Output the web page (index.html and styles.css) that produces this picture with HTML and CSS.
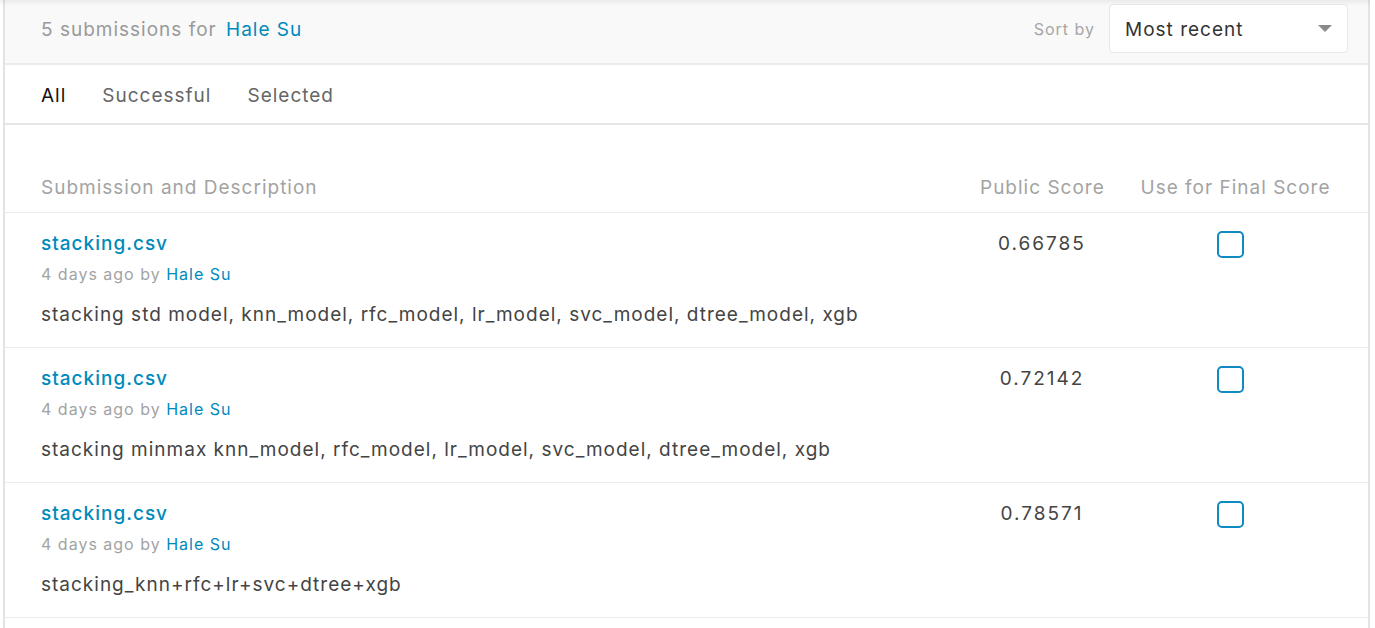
FILE: index.html
```html
<!DOCTYPE html>
<html>
<head>
<meta charset="utf-8">
<link rel="stylesheet" href="styles.css">
</head>
<body>
<div class="page">
  <div class="card">
    <div class="topbar">
      <div class="count">5 submissions for <a class="link" href="#">Hale Su</a></div>
      <div class="sort">
        <span class="sort-label">Sort by</span>
        <div class="select">
          <span>Most recent</span>
          <svg class="caret" width="14" height="8" viewBox="0 0 14 8"><path d="M0 0H14L7 7Z" fill="#8a8a8a"/></svg>
        </div>
      </div>
    </div>
    <div class="tabs">
      <span class="tab active">All</span>
      <span class="tab">Successful</span>
      <span class="tab">Selected</span>
    </div>
    <div class="table">
      <div class="row head">
        <div class="c-desc">Submission and Description</div>
        <div class="c-score">Public Score</div>
        <div class="c-use">Use for Final Score</div>
      </div>
      <div class="row item">
        <div class="c-desc">
          <a class="title" href="#">stacking.csv</a>
          <div class="meta">4 days ago by <a class="link" href="#">Hale Su</a></div>
          <div class="desc">stacking std model, knn_model, rfc_model, lr_model, svc_model, dtree_model, xgb</div>
        </div>
        <div class="c-score score">0.66785</div>
        <div class="c-use"><span class="check"></span></div>
      </div>
      <div class="row item">
        <div class="c-desc">
          <a class="title" href="#">stacking.csv</a>
          <div class="meta">4 days ago by <a class="link" href="#">Hale Su</a></div>
          <div class="desc">stacking minmax knn_model, rfc_model, lr_model, svc_model, dtree_model, xgb</div>
        </div>
        <div class="c-score score">0.72142</div>
        <div class="c-use"><span class="check"></span></div>
      </div>
      <div class="row item">
        <div class="c-desc">
          <a class="title" href="#">stacking.csv</a>
          <div class="meta">4 days ago by <a class="link" href="#">Hale Su</a></div>
          <div class="desc">stacking_knn+rfc+lr+svc+dtree+xgb</div>
        </div>
        <div class="c-score score">0.78571</div>
        <div class="c-use"><span class="check"></span></div>
      </div>
    </div>
  </div>
</div>
</body>
</html>
```
FILE: styles.css
```css
html, body {
  margin: 0;
  padding: 0;
  background: #fff;
  font-family: Inter, "Noto Sans", sans-serif;
}
.page {
  padding-left: 3px;
  width: 1367px;
  height: 628px;
  overflow: hidden;
  position: relative;
}
.page::before {
  content: "";
  position: absolute;
  left: 0; right: 0; top: 0;
  height: 6px;
  background: linear-gradient(rgba(0,0,0,0.06), rgba(0,0,0,0));
  z-index: 2;
}
.card {
  border-left: 2px solid #e3e3e3;
  border-right: 2px solid #e3e3e3;
  min-height: 700px;
  letter-spacing: 1px;
}
a { text-decoration: none; }
.link { color: #008abc; }
.topbar {
  background: #f9f9f9;
  border-bottom: 2px solid #ebebeb;
  display: flex;
  align-items: center;
  justify-content: space-between;
  padding: 0 20px 0 36px;
  box-sizing: border-box;
  height: 65px;
}
.count {
  font-size: 19px;
  color: #999;
  margin-top: -5px;
}
.count .link { margin-left: 3px; }
.sort {
  display: flex;
  align-items: center;
  gap: 14px;
  margin-top: -7px;
}
.sort-label {
  font-size: 16px;
  color: #a6a6a6;
  margin-top: 2px;
}
.select {
  width: 239px;
  height: 49px;
  box-sizing: border-box;
  background: #fff;
  border: 1px solid #e8e8e8;
  border-radius: 4px;
  display: flex;
  align-items: center;
  justify-content: space-between;
  padding: 0 15px 0 15px;
  font-size: 19px;
  color: #333;
}
.select span { margin-top: 3px; }
.caret { margin-top: 2px; }
.tabs {
  height: 60px;
  border-bottom: 2px solid #e6e6e6;
  display: flex;
  align-items: center;
  padding-left: 36px;
  gap: 36px;
  box-sizing: border-box;
}
.tab {
  font-size: 19px;
  color: #666;
  margin-top: 2px;
}
.tab.active { color: #111; }
.table { padding-top: 35px; }
.row {
  display: grid;
  grid-template-columns: 1fr 124px 187px;
  column-gap: 38px;
  padding: 0 39px 0 36px;
  border-bottom: 1px solid #ebebeb;
}
.row.head {
  height: 52px;
  align-items: center;
  font-size: 19px;
  color: #a3a3a3;
}
.row.head > div { margin-top: 2px; }
.row.head .c-score, .row.head .c-use { text-align: center; white-space: nowrap; }
.row.item {
  height: 135px;
  box-sizing: border-box;
  padding-top: 18px;
}
.title {
  display: block;
  font-size: 19px;
  font-weight: 500;
  color: #008abc;
  line-height: 26px;
}
.meta {
  font-size: 16px;
  color: #a3a3a3;
  line-height: 20px;
  margin-top: 7px;
}
.desc {
  font-size: 19px;
  color: #444;
  line-height: 26px;
  margin-top: 18px;
}
.score {
  text-align: center;
  font-size: 19px;
  color: #444;
  line-height: 26px;
  letter-spacing: 2px;
}
.c-use { display: flex; justify-content: center; }
.item .c-use { padding-right: 10px; }
.check {
  display: block;
  width: 27px;
  height: 27px;
  box-sizing: border-box;
  border: 2px solid #0f8ac2;
  border-radius: 5px;
}
```
